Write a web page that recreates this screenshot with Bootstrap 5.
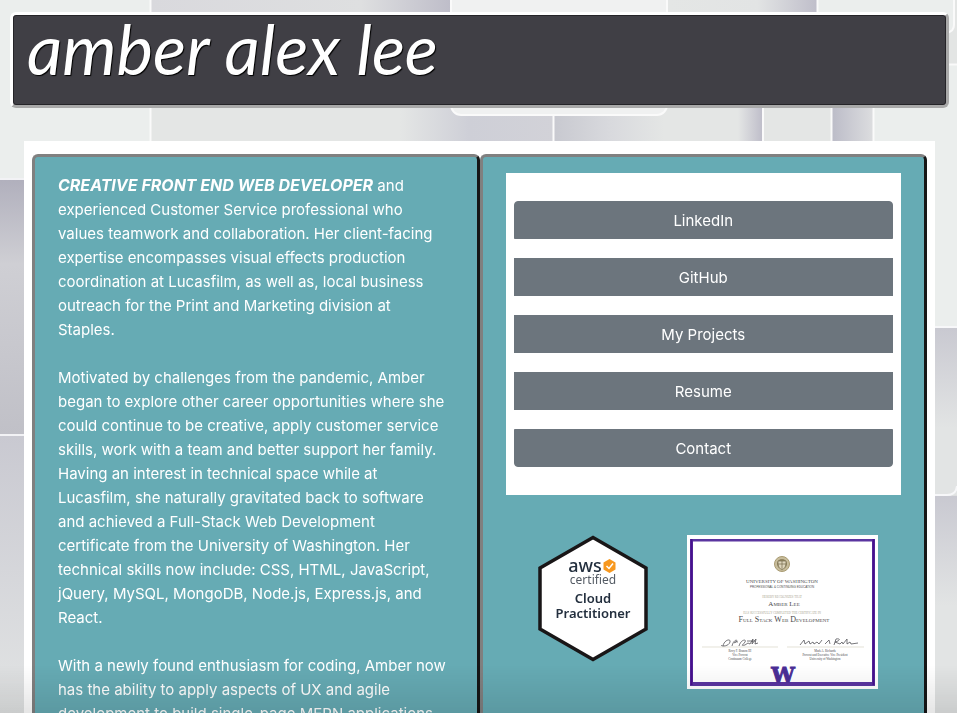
<!DOCTYPE html>
<html lang="en">
<head>
<meta charset="utf-8">
<meta name="viewport" content="width=device-width, initial-scale=1">
<title>Amber Alex Lee</title>
<link href="https://cdn.jsdelivr.net/npm/bootstrap@5.3.0/dist/css/bootstrap.min.css" rel="stylesheet">
<style>
  body { font-family: Inter, "Noto Sans", sans-serif; font-size: 15px; line-height: 24px; background: #ebeeed; }
  .backdrop { z-index: -1; }
  .masthead { margin: 12px 8px 0 10px; padding: 0 14px; height: 96px; background: #403f45; border: 3px solid; border-color: #fff #a9a9a9 #a9a9a9 #fff; border-radius: 6px; box-shadow: inset 0 0 0 1px #252428; }
  .masthead h1 { font: italic 400 69px/68px Lato, "Open Sans", sans-serif; color: #fff; text-shadow: 1px 1px 1px #000; }
  .sheet { margin: 33px 22px 24px 24px; padding: 13px 8px; }
  .panel { background: #66abb4; border: 3px solid; border-color: #808080 #161616 #161616 #808080; border-radius: 6px; padding: 16px 23px; }
  .bio { padding-top: 17px; }
  .panel strong { font-size: 16px; line-height: 20px; }
  .links { padding: 28px 8px; gap: 19px; --bs-border-radius: 4px; }
  .links .btn { height: 38px; font-size: 15px; line-height: 26px; background: #6c757d; border-color: #6c757d; color: #fff; }
  .awards { padding: 40px 23px 0 32px; }
  .shade { height: 48px; background: linear-gradient(transparent, rgba(0,0,0,.1)); }
</style>
<script src="https://cdn.jsdelivr.net/npm/bootstrap@5.3.0/dist/js/bootstrap.bundle.min.js" defer></script>
</head>
<body>
<svg class="backdrop position-fixed top-0 start-0 w-100 h-100" viewBox="0 0 957 713" preserveAspectRatio="none" aria-hidden="true">
  <defs>
    <linearGradient id="gh"><stop offset="0" stop-color="#e4e6e5"/><stop offset=".6" stop-color="#e2e4e4"/><stop offset="1" stop-color="#bfbeca"/></linearGradient>
    <linearGradient id="gh2"><stop offset="0" stop-color="#bcbcc8"/><stop offset="1" stop-color="#dcdddf"/></linearGradient>
    <linearGradient id="ge"><stop offset="0" stop-color="#e4e6e5"/><stop offset="1" stop-color="#bfbeca"/></linearGradient>
    <linearGradient id="gt"><stop offset="0" stop-color="#d9d9dd"/><stop offset=".7" stop-color="#dedfe0"/><stop offset="1" stop-color="#bebdc9"/></linearGradient>
    <linearGradient id="gv" x2="0" y2="1"><stop offset="0" stop-color="#c9c9d1"/><stop offset="1" stop-color="#e2e4e4"/></linearGradient>
    <linearGradient id="gl" x2="0" y2="1"><stop offset="0" stop-color="#b1b0bd"/><stop offset=".33" stop-color="#cfcfd4"/><stop offset="1" stop-color="#c0c0c7"/></linearGradient>
    <linearGradient id="gm"><stop offset="0" stop-color="#e4e6e5"/><stop offset=".45" stop-color="#cecfd7"/><stop offset="1" stop-color="#d2d2d8"/></linearGradient>
    <linearGradient id="gn"><stop offset="0" stop-color="#c8c9d0"/><stop offset=".5" stop-color="#d8d9dd"/><stop offset="1" stop-color="#e4e6e5"/></linearGradient>
  </defs>
  <rect width="957" height="713" fill="#ebeeed"/>
  <rect x="151" width="300" height="13" fill="url(#gt)"/>
  <rect x="668" width="149" height="13" fill="url(#gh)"/>
  <rect x="151" y="107" width="260" height="40" fill="#e4e6e5"/>
  <rect x="400" y="107" width="153" height="40" fill="url(#gm)"/>
  <rect x="554" y="107" width="110" height="40" fill="url(#gn)"/>
  <rect x="664" y="107" width="98" height="40" fill="#e4e6e5"/>
  <rect x="738" y="107" width="24" height="40" fill="url(#ge)"/>
  <rect x="763" y="107" width="68" height="40" fill="#e4e6e5"/>
  <rect x="832" y="107" width="41" height="40" fill="url(#gh2)"/>
  <rect x="451" y="-20" width="216" height="135" rx="10" fill="#f0f1f1" stroke="#fafafa" stroke-width="2"/>
  <path d="M150.500 0V147M553.500 115V147M763 107V147M831.500 107V147M873.500 107V147M817.500 0V13M667 0V13" stroke="#fafafa" stroke-width="2"/>
  <path d="M954 0V25Q954 31 947 33V64H957V0Z" fill="#e3e5e4"/>
  <path d="M954 0V25Q954 31 947 33M947 64.500H957" fill="none" stroke="#fafafa" stroke-width="2"/>
  <rect y="180" width="24" height="255" fill="url(#gl)"/>
  <rect y="435" width="24" height="278" fill="url(#gv)"/>
  <path d="M0 179H24M0 435H24" stroke="#f2f2f5" stroke-width="2"/>
  <rect x="935" y="328" width="22" height="385" fill="#dedfe0"/>
  <rect x="935" y="328" width="22" height="100" fill="url(#gv)"/>
  <rect x="935" y="428" width="22" height="67" fill="#e2e4e4"/>
  <rect x="935" y="496" width="22" height="110" fill="url(#gv)"/>
  <rect x="935" y="606" width="22" height="107" fill="#e2e4e4"/>
  <path d="M935 327H957M935 495H947Q956 495 957 486" fill="none" stroke="#f7f7f9" stroke-width="2"/>
</svg>

<header class="masthead">
  <h1 class="m-0">amber alex lee</h1>
</header>

<main class="sheet bg-white">
  <div class="row g-0">
    <section class="col-6 panel bio text-white">
      <p class="mb-4"><strong><em>CREATIVE FRONT END WEB DEVELOPER</em></strong> and experienced Customer Service professional who<br>values teamwork and collaboration. Her client-facing<br>expertise encompasses visual effects production coordination at Lucasfilm, as well as, local business outreach for the Print and Marketing division at<br>Staples.</p>
      <p class="mb-4">Motivated by challenges from the pandemic, Amber began to explore other career opportunities where she could continue to be creative, apply customer service skills, work with a team and better support her family. Having an interest in technical space while at Lucasfilm, she naturally gravitated back to software and achieved a Full-Stack Web Development<br>certificate from the University of Washington. Her technical skills now include: CSS, HTML, JavaScript,<br>jQuery, MySQL, MongoDB, Node.js, Express.js, and<br>React.</p>
      <p class="mb-4">With a newly found enthusiasm for coding, Amber now has the ability to apply aspects of UX and agile development to build single-page MERN applications.</p>
    </section>
    <section class="col-6 panel">
      <nav class="links bg-white d-flex flex-column" aria-label="Main">
        <a class="btn rounded-0 rounded-top" href="#linkedin">LinkedIn</a>
        <a class="btn rounded-0" href="#github">GitHub</a>
        <a class="btn rounded-0" href="#projects">My Projects</a>
        <a class="btn rounded-0" href="#resume">Resume</a>
        <a class="btn rounded-0 rounded-bottom" href="#contact">Contact</a>
      </nav>
      <div class="awards d-flex justify-content-between align-items-start">
        <svg width="110" height="127" viewBox="0 0 110 127" role="img" aria-label="AWS Certified Cloud Practitioner">
          <path d="M55 2.500L108 33V94L55 124.500L2 94V33Z" fill="#fff" stroke="#191617" stroke-width="3.500"/>
          <g font-family="Noto Sans, sans-serif" text-anchor="middle">
            <text x="47" y="37" font-size="18" font-weight="500" fill="#232f3e">aws</text>
            <text x="55" y="49" font-size="12" fill="#545b64">certified</text>
            <text x="55" y="68" font-size="13" font-weight="600" fill="#232f3e">Cloud</text>
            <text x="55" y="83" font-size="13" font-weight="600" fill="#232f3e">Practitioner</text>
          </g>
          <path d="M71.500 24L77.500 27.500V34.500L71.500 38L65.500 34.500V27.500Z" fill="#f7981f"/>
          <path d="M68.500 31L71 33.500L75 28.500" fill="none" stroke="#fff" stroke-width="1.500"/>
        </svg>
        <svg width="191" height="154" viewBox="0 0 191 154" role="img" aria-label="University of Washington certificate, Full Stack Web Development">
          <rect width="191" height="154" fill="#fff"/>
          <path fill-rule="evenodd" d="M3 4H188V151H3ZM6 6.500V147H185V6.500Z" fill="#5a35a0"/>
          <path d="M4.500 4V150M186.500 4V150" stroke="#48108e" stroke-width="2"/>
          <circle cx="95" cy="29" r="7.500" fill="#c8bd9c" stroke="#a99b72"/>
          <circle cx="95" cy="29" r="5" fill="#8f8461"/>
          <path d="M91 26H99V29Q99 33 95 35Q91 33 91 29ZM95 26V34M91 29H99" fill="#ded6bd" stroke="#756b4b" stroke-width=".7"/>
          <g font-family="Liberation Serif, serif" text-anchor="middle" fill="#4a4a4d">
            <text x="95" y="48" font-size="5">UNIVERSITY OF WASHINGTON</text>
            <text x="95" y="53" font-size="3" font-family="Liberation Sans, sans-serif">PROFESSIONAL &amp; CONTINUING EDUCATION</text>
            <text x="95" y="63" font-size="3" fill="#aaa693">HEREBY RECOGNIZES THAT</text>
            <text x="97" y="71" font-size="7">A<tspan font-size="5">MBER</tspan> L<tspan font-size="5">EE</tspan></text>
            <text x="95" y="79" font-size="3" fill="#aaa693">HAS SUCCESSFULLY COMPLETED THE CERTIFICATE IN</text>
            <text x="97" y="87" font-size="8">F<tspan font-size="5">ULL</tspan> S<tspan font-size="5">TACK</tspan> W<tspan font-size="5">EB</tspan> D<tspan font-size="5">EVELOPMENT</tspan></text>
            <g font-size="3">
              <text x="53" y="117">Rovy F. Branon III</text><text x="53" y="121">Vice Provost</text><text x="53" y="125">Continuum College</text>
              <text x="138" y="117">Mark A. Richards</text><text x="138" y="121">Provost and Executive Vice President</text><text x="138" y="125">University of Washington</text>
            </g>
            <text x="96" y="147" font-size="21" font-weight="700" font-family="DejaVu Serif, serif" fill="#4b2e96" stroke="#4b2e96">W</text>
          </g>
          <path d="M15 112H91M100 112H177" stroke="#d8d5c6" stroke-width=".7"/>
          <path d="M36 111C37 105 44 103 43 107C42 111 35 112 34 110M45 111C47 103 52 105 49 107C46 109 47 106 51 107M52 111C54 104 60 104 58 107C56 110 53 111 58 110L61 108L63 109L66 104L65 109L69 104L68 109L71 108M60 106H68M113 110L117 105L118 109L122 106L123 109L126 107L127 109L130 107L132 109L135 105M138 109L142 105L143 109M147 110L149 104C154 103 153 106 148 107L153 109L155 107L156 109L160 104L160 109L163 107L164 109L171 108" fill="none" stroke="#55555a" stroke-width=".8"/>
        </svg>
      </div>
    </section>
  </div>
</main>
<div class="shade position-fixed bottom-0 start-0 w-100 pe-none"></div>
</body>
</html>
